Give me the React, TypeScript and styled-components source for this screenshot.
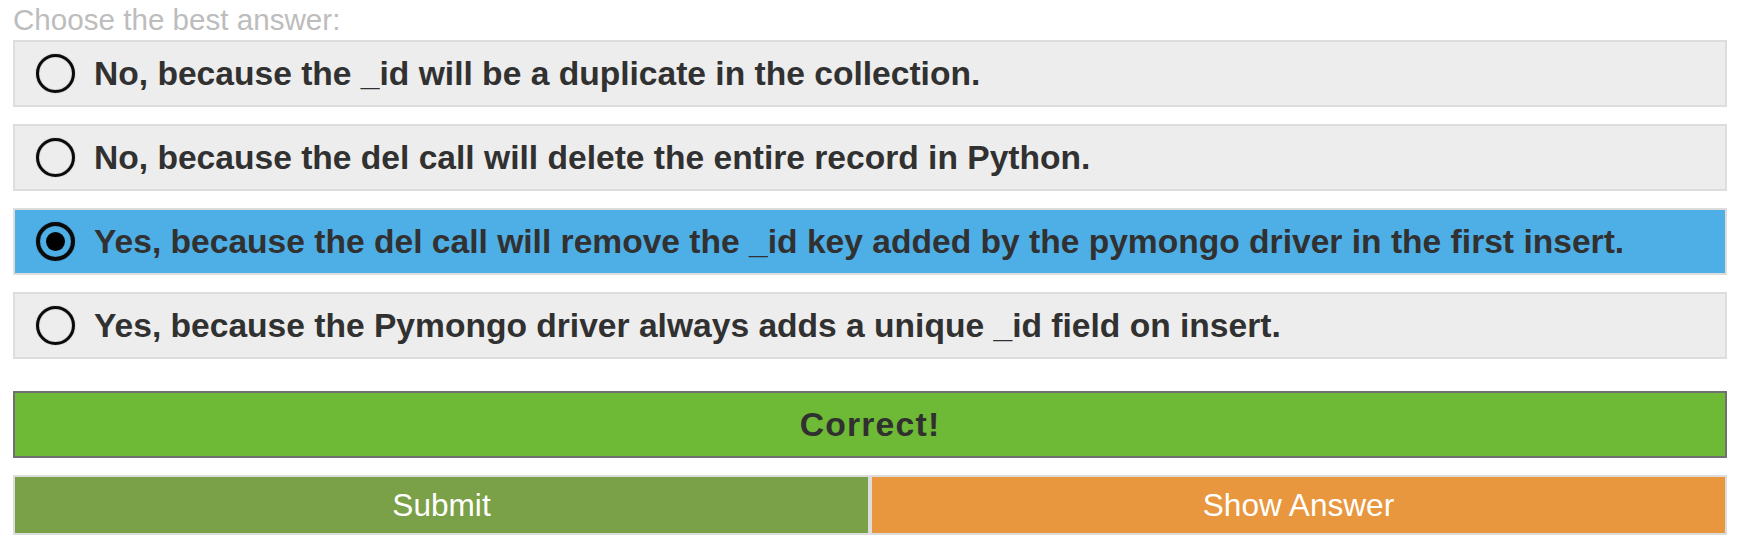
import React from "react";
import styled, { createGlobalStyle } from "styled-components";

const Global = createGlobalStyle`
  html, body { margin: 0; padding: 0; background: #ffffff; }
  body { font-family: "Liberation Sans", Arial, Helvetica, sans-serif; }
  * { box-sizing: border-box; }
`;

const Page = styled.div`
  padding: 0 11px 0 13px;
  width: 1738px;
`;

const Prompt = styled.div`
  height: 40px;
  line-height: 40px;
  font-size: 29.6px;
  font-weight: 400;
  color: #bdbdbd;
  white-space: nowrap;
`;

const OptionList = styled.div`
  display: flex;
  flex-direction: column;
  gap: 17px;
`;

const Option = styled.label<{ $selected?: boolean }>`
  display: flex;
  align-items: center;
  gap: 19px;
  height: 67px;
  padding-left: 21px;
  border: 2px solid #dddddd;
  background: ${(p) => (p.$selected ? "#4eaee6" : "#ededed")};
  cursor: pointer;
`;

const Radio = styled.span<{ $checked?: boolean }>`
  flex: 0 0 auto;
  width: 39px;
  height: 39px;
  border-radius: 50%;
  border: ${(p) => (p.$checked ? "4px" : "3.5px")} solid #0a0a0a;
  box-shadow: 0 0 1px rgba(0, 0, 0, 0.6), inset 0 0 1px rgba(0, 0, 0, 0.6);
  display: flex;
  align-items: center;
  justify-content: center;

  &::after {
    content: "";
    display: ${(p) => (p.$checked ? "block" : "none")};
    width: 19px;
    height: 19px;
    border-radius: 50%;
    background: #000000;
  }
`;

const OptionText = styled.span`
  font-size: 33.6px;
  font-weight: 700;
  color: #313131;
  white-space: nowrap;
`;

const Feedback = styled.div`
  margin-top: 32px;
  height: 67px;
  border: 2px solid #707070;
  background: #6eb935;
  display: flex;
  align-items: center;
  justify-content: center;
  font-size: 33.7px;
  font-weight: 700;
  letter-spacing: 1.2px;
  color: #303030;
`;

const ButtonRow = styled.div`
  margin-top: 17px;
  display: grid;
  grid-template-columns: 1fr 1fr;
`;

const ActionButton = styled.button<{ $tone: "submit" | "show" }>`
  height: 60px;
  border: 2px solid #dddddd;
  border-radius: 0;
  background: ${(p) => (p.$tone === "submit" ? "#7aa048" : "#e8973f")};
  color: #ffffff;
  font-family: "Liberation Sans", Arial, Helvetica, sans-serif;
  font-size: 31.6px;
  font-weight: 400;
  padding: 0;
  cursor: pointer;
`;

const options = [
  "No, because the _id will be a duplicate in the collection.",
  "No, because the del call will delete the entire record in Python.",
  "Yes, because the del call will remove the _id key added by the pymongo driver in the first insert.",
  "Yes, because the Pymongo driver always adds a unique _id field on insert.",
];

export default function App() {
  const selected = 2;
  return (
    <>
      <Global />
      <Page>
        <Prompt>Choose the best answer:</Prompt>
        <OptionList>
          {options.map((text, i) => (
            <Option key={i} $selected={i === selected}>
              <Radio $checked={i === selected} />
              <OptionText>{text}</OptionText>
            </Option>
          ))}
        </OptionList>
        <Feedback>Correct!</Feedback>
        <ButtonRow>
          <ActionButton $tone="submit">Submit</ActionButton>
          <ActionButton $tone="show">Show Answer</ActionButton>
        </ButtonRow>
      </Page>
    </>
  );
}
